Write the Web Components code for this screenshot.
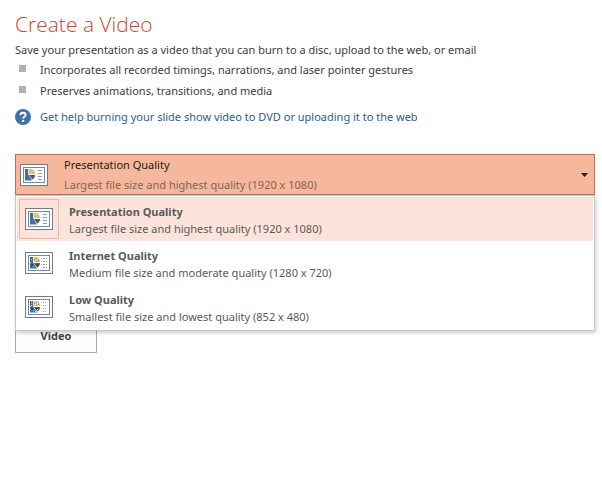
<!DOCTYPE html>
<html lang="en">
<head>
<meta charset="utf-8">
<meta name="viewport" content="width=device-width, initial-scale=1">
<title>Create a Video</title>
<style>
  body {
    margin: 0;
    font-family: "Noto Sans", "Open Sans", sans-serif;
    font-size: 11px;
    line-height: 16px;
    color: #3c3c3c;
    background: #fff;
  }
</style>
</head>
<body>

<export-video>
  <quality-picker slot="quality">
    <quality-option selected level="high" name="Presentation Quality">Largest file size and highest quality (1920 x 1080)</quality-option>
    <quality-option level="medium" name="Internet Quality">Medium file size and moderate quality (1280 x 720)</quality-option>
    <quality-option level="low" name="Low Quality">Smallest file size and lowest quality (852 x 480)</quality-option>
  </quality-picker>
  <create-button slot="action">Video</create-button>
</export-video>

<template id="export-video">
  <style>
    :host {
      display: block;
      padding: 8px 7px 8px 15px;
    }
    h1 {
      margin: 0;
      font-family: "Open Sans", "Noto Sans", sans-serif;
      font-size: 21px;
      font-weight: 300;
      line-height: 32px;
      color: #d24726;
    }
    p {
      margin: 0;
      line-height: 20px;
    }
    ul {
      margin: 0;
      padding: 0;
      list-style: none;
    }
    li {
      display: flex;
      align-items: center;
      gap: 14px;
      padding-left: 4px;
      line-height: 20px;
    }
    li + li {
      margin-top: 1px;
    }
    li::before {
      content: "";
      width: 7px;
      height: 7px;
      margin-bottom: 3px;
      background: #b1b1b1;
    }
    .help {
      display: flex;
      align-items: center;
      gap: 9px;
      margin: 8px 0 29px;
    }
    .help svg {
      width: 16px;
      height: 16px;
    }
    a {
      color: #2a6090;
      text-decoration: none;
    }
    a:hover {
      text-decoration: underline;
    }
  </style>
  <h1>Create a Video</h1>
  <p>Save your presentation as a video that you can burn to a disc, upload to the web, or email</p>
  <ul>
    <li>Incorporates all recorded timings, narrations, and laser pointer gestures</li>
    <li>Preserves animations, transitions, and media</li>
  </ul>
  <div class="help">
    <svg viewBox="0 0 16 16" aria-hidden="true">
      <circle cx="8" cy="8" r="8" fill="#3d72a8"/>
      <path d="M5.4 6.2C5.4 4.5 6.5 3.7 8 3.7s2.6.8 2.6 2.2c0 1.8-2.5 1.8-2.5 3.7" fill="none" stroke="#fff" stroke-width="1.9"/>
      <circle cx="8.1" cy="11.9" r="1.2" fill="#fff"/>
    </svg>
    <a href="#help">Get help burning your slide show video to DVD or uploading it to the web</a>
  </div>
  <slot name="quality"></slot>
  <slot name="action"></slot>
</template>

<template id="slide-icon">
  <style>
    :host {
      display: block;
      width: 28px;
      height: 22px;
    }
    svg {
      display: block;
    }
    .dots {
      display: none;
    }
    :host([level="medium"]) .medium,
    :host([level="low"]) .medium,
    :host([level="low"]) .low {
      display: inline;
    }
    :host([level="medium"]) .lines {
      stroke-dasharray: 2 1;
    }
    :host([level="low"]) .lines {
      stroke-dasharray: 1 1;
    }
  </style>
  <svg width="28" height="22" viewBox="0 0 28 22" aria-hidden="true">
    <rect x=".5" y=".5" width="27" height="21" fill="#fff" stroke="#747b80"/>
    <rect x="3.5" y="3.5" width="21" height="15" fill="#fff" stroke="#6c8da5"/>
    <path d="M5 5h3v5l4 6.5H5z" fill="#41719c"/>
    <path d="M8.500 10V5H12c2 .8 3 2.500 3 5z" fill="#e3c07f"/>
    <path d="M9 11h6c0 2-1 3.600-2.800 4.400z" fill="#4f5a63"/>
    <path class="lines" d="M18 6.500h4M18 9.500h4M18 12.500h4M18 15.500h4" stroke="#86a5bb"/>
    <path d="M16 6h1v1h-1zM16 9h1v1h-1zM16 12h1v1h-1z" fill="#c3d3de"/>
    <g class="dots medium">
      <path d="M9 7h1v1H9zM11 6h1v1h-1zM13 8h1v1h-1zM11 9h1v1h-1z" fill="#c08a3e"/>
      <path d="M6 7h1v1H6zM5 10h1v1H5zM8 14h1v1H8z" fill="#a9cbe5"/>
      <path d="M5 5h1v2H5zM6 12h2v2H6zM11 12h2v2h-2z" fill="#24435f"/>
    </g>
    <g class="dots low">
      <path d="M10 8h1v1h-1zM12 7h1v1h-1zM13 9h1v1h-1z" fill="#fff"/>
      <path d="M6 5h1v1H6zM6 9h1v1H6zM5 13h1v1H5zM10 15h1v1h-1zM12 13h1v1h-1z" fill="#d5e5f0"/>
    </g>
  </svg>
</template>

<template id="quality-option">
  <style>
    :host {
      display: block;
    }
    button {
      display: flex;
      align-items: center;
      gap: 10px;
      width: 100%;
      height: 44px;
      padding: 0 2px;
      border: 0;
      font: inherit;
      text-align: left;
      color: #5a5a5a;
      background: none;
    }
    .frame {
      padding: 8px 5px;
      border: 1px solid transparent;
    }
    .text {
      padding-top: 2px;
    }
    .name,
    .detail {
      display: block;
      line-height: 17px;
    }
    .name {
      font-weight: 700;
    }
    :host([selected]) button,
    button:hover {
      background: #fce4dc;
    }
    :host([selected]) .frame {
      border-color: #f3b9a5;
    }
  </style>
  <button type="button" role="option">
    <span class="frame"><slide-icon></slide-icon></span>
    <span class="text">
      <span class="name"></span>
      <span class="detail"><slot></slot></span>
    </span>
  </button>
</template>

<template id="quality-picker">
  <style>
    :host {
      display: block;
      position: relative;
    }
    .current {
      display: flex;
      align-items: center;
      gap: 16px;
      width: 100%;
      height: 41px;
      padding: 0 6px 0 4px;
      border: 1px solid #d0674f;
      font: inherit;
      text-align: left;
      color: #2b1a14;
      background: #f5b89d;
    }
    .text {
      flex: 1;
    }
    .name,
    .detail {
      display: block;
      line-height: 20px;
    }
    .detail {
      color: #80655a;
    }
    .menu {
      position: absolute;
      top: 100%;
      left: 0;
      right: 0;
      z-index: 1;
      padding: 1px;
      border: 1px solid #c6c6c6;
      background: #fff;
      box-shadow: 1px 2px 4px rgba(0, 0, 0, .2);
    }
    .menu[hidden] {
      display: none;
    }
  </style>
  <button class="current" type="button" aria-haspopup="listbox" aria-expanded="true">
    <slide-icon></slide-icon>
    <span class="text">
      <span class="name"></span>
      <span class="detail"></span>
    </span>
    <svg width="7" height="4" viewBox="0 0 7 4" aria-hidden="true"><path d="M0 0h7L3.5 4z" fill="#2b1a14"/></svg>
  </button>
  <div class="menu" role="listbox" aria-label="Video quality"><slot></slot></div>
</template>

<template id="create-button">
  <style>
    :host {
      display: block;
      margin-top: 78px;
    }
    button {
      display: flex;
      align-items: flex-end;
      justify-content: center;
      width: 82px;
      height: 80px;
      padding: 0 0 8px;
      border: 1px solid #ababab;
      font: inherit;
      font-weight: 700;
      color: #444;
      background: #fdfdfd;
    }
  </style>
  <button type="button"><slot></slot></button>
</template>

<script>
'use strict';

(function() {
  function render(element, id) {
    const shadow = element.attachShadow({ mode: 'open' });
    shadow.appendChild(document.getElementById(id).content.cloneNode(true));
    return shadow;
  }

  class SlideIcon extends HTMLElement {
    constructor() {
      super();
      render(this, 'slide-icon');
    }
  }

  class QualityOption extends HTMLElement {
    constructor() {
      super();
      render(this, 'quality-option');
    }

    static get observedAttributes() {
      return ['selected'];
    }

    connectedCallback() {
      this.shadowRoot.querySelector('.name').textContent = this.getAttribute('name');
      this.shadowRoot.querySelector('slide-icon').setAttribute('level', this.getAttribute('level'));
    }

    attributeChangedCallback() {
      this.shadowRoot.querySelector('button').setAttribute('aria-selected', this.hasAttribute('selected'));
    }
  }

  class QualityPicker extends HTMLElement {
    constructor() {
      super();
      const shadow = render(this, 'quality-picker');
      this.current = shadow.querySelector('.current');
      this.menu = shadow.querySelector('.menu');
      this.toggle = this.toggle.bind(this);
      this.choose = this.choose.bind(this);
    }

    connectedCallback() {
      this.current.addEventListener('click', this.toggle);
      this.menu.addEventListener('click', this.choose);
      this.showCurrent();
    }

    toggle() {
      this.menu.hidden = !this.menu.hidden;
      this.current.setAttribute('aria-expanded', !this.menu.hidden);
    }

    choose(e) {
      const option = e.target.closest('quality-option');
      if (!option) {
        return;
      }
      this.querySelectorAll('quality-option').forEach(item => {
        item.toggleAttribute('selected', item === option);
      });
      this.showCurrent();
      this.toggle();
    }

    showCurrent() {
      const option = this.querySelector('[selected]');
      this.current.querySelector('.name').textContent = option.getAttribute('name');
      this.current.querySelector('.detail').textContent = option.textContent;
      this.current.querySelector('slide-icon').setAttribute('level', option.getAttribute('level'));
    }
  }

  class CreateButton extends HTMLElement {
    constructor() {
      super();
      render(this, 'create-button');
    }
  }

  class ExportVideo extends HTMLElement {
    constructor() {
      super();
      render(this, 'export-video');
    }
  }

  customElements.define('slide-icon', SlideIcon);
  customElements.define('quality-option', QualityOption);
  customElements.define('quality-picker', QualityPicker);
  customElements.define('create-button', CreateButton);
  customElements.define('export-video', ExportVideo);
})();
</script>
</body>
</html>
